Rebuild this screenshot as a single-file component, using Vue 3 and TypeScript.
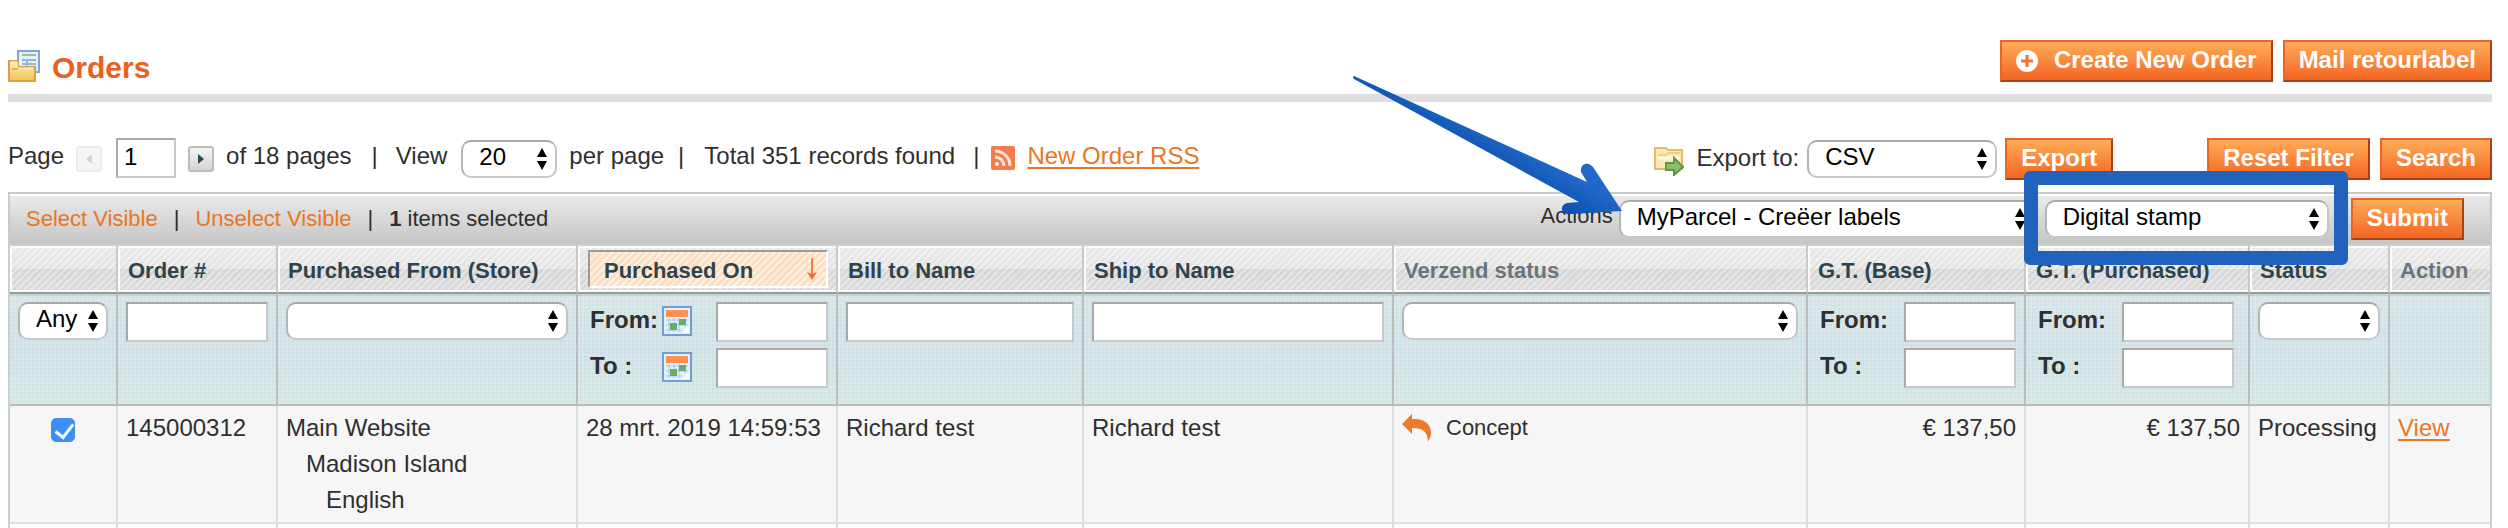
<script setup lang="ts">
import { ref } from 'vue'

interface Column {
  key: string
  label: string
  width?: number
  filter: 'select' | 'text' | 'dates' | 'range' | 'none'
  option?: string
  muted?: boolean
  sorted?: boolean
}

const columns: Column[] = [
  { key: 'pick', label: '', width: 108, filter: 'select', option: 'Any' },
  { key: 'order', label: 'Order #', width: 160, filter: 'text' },
  { key: 'store', label: 'Purchased From (Store)', width: 300, filter: 'select' },
  { key: 'date', label: 'Purchased On', width: 260, filter: 'dates', sorted: true },
  { key: 'bill', label: 'Bill to Name', width: 246, filter: 'text' },
  { key: 'ship', label: 'Ship to Name', width: 310, filter: 'text' },
  { key: 'shipment', label: 'Verzend status', filter: 'select', muted: true },
  { key: 'base', label: 'G.T. (Base)', width: 218, filter: 'range' },
  { key: 'total', label: 'G.T. (Purchased)', width: 224, filter: 'range' },
  { key: 'status', label: 'Status', width: 140, filter: 'select' },
  { key: 'action', label: 'Action', width: 100, filter: 'none', muted: true },
]

const bounds = [
  { key: 'from', label: 'From:' },
  { key: 'to', label: 'To :' },
]

const page = ref('1')
const checked = ref(true)
</script>

<template>
  <main class="page">
    <header class="head">
      <svg class="head-icon" viewBox="0 0 32 32" aria-hidden="true">
        <defs>
          <linearGradient id="folder" x1="0" y1="0" x2="0" y2="1">
            <stop offset="0" stop-color="#fff3c4" />
            <stop offset="1" stop-color="#f0c24a" />
          </linearGradient>
        </defs>
        <rect x="10" y="1" width="21" height="21" fill="#e6f0fc" stroke="#7ba7dc" stroke-width="2" />
        <path d="M14 5h14" stroke="#8cc88f" stroke-width="2" />
        <path d="M14 10h14M14 14h14M14 18h14M19 9v10" stroke="#8fb4e6" stroke-width="2" />
        <path d="M1 11h9v6h17v14H1z" fill="url(#folder)" stroke="#dda049" stroke-width="2" />
        <path d="M3 12h6v6h17" fill="none" stroke="#fff8dc" stroke-width="1" />
        <path d="M4 19h6" stroke="#e8b04f" stroke-width="2" />
      </svg>
      <h1>Orders</h1>
      <div class="head-actions">
        <button type="button" class="btn">
          <svg class="plus" viewBox="0 0 22 22" aria-hidden="true">
            <circle cx="11" cy="11" r="11" fill="#fff" />
            <path d="M11 5v12M5 11h12" stroke="#f0743a" stroke-width="3" />
          </svg>
          <span>Create New Order</span>
        </button>
        <button type="button" class="btn">Mail retourlabel</button>
      </div>
    </header>

    <div class="pager">
      <label for="page-number">Page</label>
      <button type="button" class="step previous" disabled aria-label="Previous page">
        <svg viewBox="0 0 8 12" aria-hidden="true"><path d="M7 1v10L1 6z" fill="#d0d4d6" /></svg>
      </button>
      <input id="page-number" v-model="page" class="field page-number" type="text" />
      <button type="button" class="step" aria-label="Next page">
        <svg viewBox="0 0 8 12" aria-hidden="true"><path d="M1 1v10l6-5z" fill="#2d4a5a" /></svg>
      </button>
      <span>of 18 pages</span>
      <span class="bar wide">|</span>
      <label for="page-size">View</label>
      <span class="pick page-size">
        <select id="page-size"><option>20</option></select>
        <svg class="arrows" viewBox="0 0 12 22" aria-hidden="true"><path d="M6 0l5 9H1zM6 22l5-9H1z" /></svg>
      </span>
      <span>per page</span>
      <span class="bar">|</span>
      <span>Total 351 records found</span>
      <span class="bar wide-left">|</span>
      <svg class="rss" viewBox="0 0 24 24" aria-hidden="true">
        <rect width="24" height="24" rx="2" fill="#f47b4c" />
        <circle cx="6" cy="18" r="2" fill="#fff" />
        <path d="M4 11a9 9 0 0 1 9 9M4 5a15 15 0 0 1 15 15" fill="none" stroke="#fde4da" stroke-width="3" />
      </svg>
      <a href="#rss">New Order RSS</a>

      <div class="export">
        <svg class="export-icon" viewBox="0 0 30 30" aria-hidden="true">
          <path d="M1 2h11l2 2h14v19H1z" fill="#fbe9bb" stroke="#e6b96e" stroke-width="2" />
          <path d="M4 9h8l2-2h12" fill="none" stroke="#f0cf86" stroke-width="2" />
          <path d="M4 12h22" stroke="#fff8e2" stroke-width="3" />
          <path d="M12 17h8v-5l9 9-9 8v-5h-8z" fill="#8cbd72" stroke="#5a9a45" stroke-width="2" />
        </svg>
        <label for="export-format">Export to:</label>
        <span class="pick format">
          <select id="export-format"><option>CSV</option></select>
          <svg class="arrows" viewBox="0 0 12 22" aria-hidden="true"><path d="M6 0l5 9H1zM6 22l5-9H1z" /></svg>
        </span>
        <button type="button" class="btn">Export</button>
      </div>
      <div class="search">
        <button type="button" class="btn">Reset Filter</button>
        <button type="button" class="btn">Search</button>
      </div>
    </div>

    <div class="mass">
      <div class="mass-select">
        <a href="#select">Select Visible</a>
        <span>|</span>
        <a href="#unselect">Unselect Visible</a>
        <span>|</span>
        <span><strong>1</strong> items selected</span>
      </div>
      <div class="mass-action">
        <label for="mass-action">Actions</label>
        <span class="pick mass-pick">
          <select id="mass-action"><option>MyParcel - Creëer labels</option></select>
          <svg class="arrows" viewBox="0 0 12 22" aria-hidden="true"><path d="M6 0l5 9H1zM6 22l5-9H1z" /></svg>
          <svg class="pointer" viewBox="0 0 276 142" aria-hidden="true">
            <defs>
              <linearGradient id="pointer-fill" gradientUnits="userSpaceOnUse" x1="160" y1="66" x2="144" y2="94">
                <stop offset="0" stop-color="#2167c7" />
                <stop offset="1" stop-color="#0c52b0" />
              </linearGradient>
            </defs>
            <path
              d="M4 2Q2 3 4 5L229 128L217 129Q211 131 212 136Q214 141 222 140L272 137L243 93Q238 87 233 91Q230 94 231 98L237 108Z"
              fill="url(#pointer-fill)"
            />
          </svg>
        </span>
        <span class="pick parcel-pick">
          <select aria-label="Package type"><option>Digital stamp</option></select>
          <svg class="arrows" viewBox="0 0 12 22" aria-hidden="true"><path d="M6 0l5 9H1zM6 22l5-9H1z" /></svg>
          <span class="frame"></span>
        </span>
        <button type="button" class="btn">Submit</button>
      </div>
    </div>

    <table class="grid">
      <colgroup>
        <col v-for="c in columns" :key="c.key" :style="c.width ? { width: c.width + 'px' } : undefined" />
      </colgroup>
      <thead>
        <tr class="titles">
          <th v-for="c in columns" :key="c.key" scope="col" :class="{ muted: c.muted }">
            <span v-if="c.sorted" class="sorted">
              {{ c.label }}
              <svg viewBox="0 0 12 24" aria-hidden="true">
                <path d="M6 0v18" stroke="#fb7b3a" stroke-width="2" />
                <path d="M1 14l5 2 5-2-5 8z" fill="#fb6a26" />
              </svg>
            </span>
            <template v-else>{{ c.label }}</template>
          </th>
        </tr>
        <tr class="filters">
          <td v-for="c in columns" :key="c.key">
            <span v-if="c.filter === 'select'" class="pick">
              <select :aria-label="c.label || 'Selection'"><option>{{ c.option }}</option></select>
              <svg class="arrows" viewBox="0 0 12 22" aria-hidden="true"><path d="M6 0l5 9H1zM6 22l5-9H1z" /></svg>
            </span>
            <input v-else-if="c.filter === 'text'" class="field" type="text" :aria-label="c.label" />
            <div v-else-if="c.filter !== 'none'" class="range" :class="c.filter">
              <div v-for="b in bounds" :key="b.key" class="range-line">
                <label :for="c.key + '-' + b.key">{{ b.label }}</label>
                <svg v-if="c.filter === 'dates'" class="calendar" viewBox="0 0 30 30" aria-hidden="true">
                  <rect x="1" y="1" width="28" height="28" fill="#e6f0fc" stroke="#6f9fdb" stroke-width="2" />
                  <rect x="4" y="4" width="22" height="7" fill="#ff9150" />
                  <path d="M4 14h22M4 19h22M4 24h16M7 12v14M12 12v14M17 12v14M23 12v9" stroke="#a9c6ea" stroke-width="1" />
                  <rect x="17" y="13" width="7" height="6" fill="#63b060" />
                  <rect x="8" y="17" width="7" height="7" fill="#63b060" />
                  <path d="M20 27l7-7v7z" fill="#fff" />
                </svg>
                <input :id="c.key + '-' + b.key" class="field" type="text" />
              </div>
            </div>
          </td>
        </tr>
      </thead>
      <tbody>
        <tr class="order">
          <td><input v-model="checked" type="checkbox" aria-label="Select order 145000312" /></td>
          <td>145000312</td>
          <td>
            <div>Main Website</div>
            <div class="indent-1">Madison Island</div>
            <div class="indent-2">English</div>
          </td>
          <td class="nowrap">28 mrt. 2019 14:59:53</td>
          <td>Richard test</td>
          <td>Richard test</td>
          <td>
            <span class="shipment">
              <svg viewBox="0 0 30 28" aria-hidden="true">
                <path d="M0 10L10 0v5C22 4 30 10 29 21l-3 7C26 18 21 14 10 14v6z" fill="#ea7a2c" />
              </svg>
              Concept
            </span>
          </td>
          <td class="number">€ 137,50</td>
          <td class="number">€ 137,50</td>
          <td>Processing</td>
          <td><a href="#view">View</a></td>
        </tr>
        <tr class="next"><td v-for="c in columns" :key="c.key"></td></tr>
      </tbody>
    </table>
  </main>
</template>

<style>
body {
  margin: 0;
  background: #fff;
}
</style>

<style scoped>
* {
  box-sizing: border-box;
}
.page {
  padding: 40px 16px 0 8px;
  color: #2f2f2f;
  font: 24px/36px "Liberation Sans", Arial, sans-serif;
}
input,
select,
button {
  margin: 0;
  font: inherit;
}
a {
  color: #ea7623;
  text-underline-offset: 3px;
  text-decoration-thickness: 2px;
}
.head {
  display: flex;
  align-items: flex-start;
  padding-bottom: 10px;
  border-bottom: 8px solid #dfdfdf;
}
.head-icon {
  width: 32px;
  height: 32px;
  margin-top: 10px;
}
h1 {
  margin: 12px 0 0 12px;
  color: #eb5e24;
  font-size: 30px;
  line-height: 32px;
}
.head-actions {
  display: flex;
  gap: 10px;
  margin-left: auto;
}
.btn {
  display: flex;
  flex: none;
  align-items: center;
  gap: 16px;
  height: 42px;
  padding: 0 14px 3px;
  border: 2px solid;
  border-color: #ea6428 #a3431a #a3431a #ea6428;
  background: linear-gradient(#ffac57, #f36523);
  color: #fff;
  font-weight: bold;
  white-space: nowrap;
}
.plus {
  width: 22px;
  height: 22px;
  margin-top: 3px;
}
.field {
  display: block;
  width: 100%;
  height: 40px;
  padding: 0 6px 2px;
  border: 2px solid;
  border-color: #a9a9a9 #c8c8c8 #c8c8c8 #a9a9a9;
  border-radius: 0;
  background: #fff;
  color: #000;
}
.pick {
  position: relative;
  display: block;
}
.pick select {
  display: block;
  width: 100%;
  height: 38px;
  padding: 0 20px 4px 16px;
  border: 2px solid;
  border-color: #a9a9a9 #c4c4c4 #c8c8c8 #b4b4b4;
  border-radius: 10px;
  background: #fff;
  color: #000;
  line-height: 28px;
  appearance: none;
}
.arrows {
  position: absolute;
  top: 8px;
  right: 9px;
  width: 12px;
  height: 22px;
  pointer-events: none;
}
.pager {
  display: flex;
  align-items: flex-start;
  gap: 12px;
  margin-top: 36px;
  white-space: nowrap;
}
.step {
  display: flex;
  align-items: center;
  justify-content: center;
  width: 26px;
  height: 26px;
  margin-top: 8px;
  padding: 0;
  border: 2px solid #bcbcbc;
  border-radius: 3px;
  background: linear-gradient(#f4f4f4, #d4d4d4);
}
.previous {
  margin-right: 2px;
}
.step:disabled {
  border-color: #ececec;
  background: #f5f5f5;
}
.step svg {
  width: 8px;
  height: 12px;
}
.page-number {
  width: 60px;
}
.bar {
  margin: 0 8px 0 2px;
}
.wide {
  margin: 0 6px 0 8px;
}
.wide-left {
  margin: 0 0 0 6px;
}
.page-size {
  width: 96px;
  margin: 2px 0 0 2px;
}
.rss {
  width: 24px;
  height: 24px;
  margin-top: 8px;
}
.export {
  display: flex;
  gap: 8px;
  margin-left: auto;
  line-height: 40px;
}
.export-icon {
  width: 30px;
  height: 30px;
  margin: 8px 4px 0 0;
}
.format {
  width: 190px;
  margin-top: 2px;
}
.search {
  display: flex;
  gap: 10px;
  margin-left: 82px;
}
.mass {
  display: flex;
  align-items: flex-start;
  justify-content: space-between;
  height: 54px;
  margin-top: 12px;
  padding: 2px 26px 0 16px;
  border: 2px solid #c9c9c9;
  border-bottom-color: #c8d0d0;
  background: linear-gradient(#ebebeb, #c5c5c5);
  box-shadow: inset 0 2px #fff;
  white-space: nowrap;
}
.mass-select {
  display: flex;
  gap: 16px;
  font-size: 22px;
  line-height: 46px;
}
.mass-select a {
  text-decoration: none;
}
.mass-action {
  display: flex;
}
.mass-action label {
  font-size: 22px;
  line-height: 40px;
}
.mass-pick {
  width: 416px;
  margin: 4px 0 0 6px;
}
.parcel-pick {
  width: 284px;
  margin: 4px 22px 0 10px;
}
.mass-action .btn {
  margin-top: 2px;
}
.pointer {
  position: absolute;
  z-index: 2;
  top: -126px;
  left: -269px;
  width: 276px;
  height: 142px;
  pointer-events: none;
}
.frame {
  position: absolute;
  z-index: 2;
  inset: -29px -19px -25px -21px;
  border: 14px solid #2162bd;
  border-radius: 6px;
  pointer-events: none;
}
.grid {
  width: 100%;
  border: solid #c8d0d0;
  border-width: 0 2px;
  border-spacing: 0;
  table-layout: fixed;
}
.grid th,
.grid td {
  text-align: left;
  vertical-align: top;
}
.grid th:last-child,
.grid td:last-child {
  border-right: 0;
}
.titles th {
  height: 48px;
  padding: 4px 8px 0 10px;
  border-right: 2px solid #c8c8c8;
  border-bottom: 2px solid #929b99;
  background:
    repeating-linear-gradient(135deg, rgba(255, 255, 255, 0.3) 0 2px, rgba(180, 180, 180, 0.08) 2px 5px),
    linear-gradient(#ededed 0, #e8e8e8 50%, #dadada 50%, #dedede 100%);
  box-shadow: inset 2px 2px #fbfbfb, inset 0 -2px #fbfbfb;
  color: #2d444f;
  font-size: 22px;
  line-height: 42px;
  white-space: nowrap;
}
.titles .muted {
  color: #67767e;
}
.sorted {
  display: flex;
  justify-content: space-between;
  height: 38px;
  padding: 0 8px 0 14px;
  border: 2px solid;
  border-color: #9a9a9a #fff #fff #9a9a9a;
  background: repeating-linear-gradient(135deg, #fff0df 0 2px, #fadfc4 2px 5px);
  line-height: 38px;
}
.sorted svg {
  width: 12px;
  height: 24px;
  margin-top: 6px;
}
.filters td {
  height: 112px;
  padding: 8px 8px 16px;
  border-right: 2px solid #bcbcbc;
  border-bottom: 2px solid #b9bcbb;
  background:
    repeating-linear-gradient(90deg, rgba(255, 255, 255, 0.12) 0 2px, transparent 2px 4px),
    repeating-linear-gradient(rgba(255, 255, 255, 0.12) 0 2px, transparent 2px 4px),
    linear-gradient(#d2e3e4, #cddfe4 50%, #d2e5e3);
  box-shadow: inset 0 2px rgba(160, 175, 175, 0.35);
}
.range {
  display: flex;
  flex-direction: column;
  gap: 6px;
  width: 200px;
}
.range.dates {
  width: 100%;
}
.range-line {
  display: flex;
}
.range-line label {
  width: 76px;
  padding-left: 4px;
  font-weight: bold;
}
.range-line .field {
  width: 112px;
  margin-left: auto;
}
.calendar {
  width: 30px;
  height: 30px;
  margin-top: 4px;
}
.order td {
  padding: 4px 8px;
  border-right: 2px solid #dae0de;
  border-bottom: 2px solid #dae0de;
  background: #f6f6f6;
}
.order input {
  appearance: none;
  display: block;
  width: 24px;
  height: 24px;
  margin: 8px auto 0;
  border: 1px solid #aaa;
  border-radius: 5px;
  background: #fff;
}
.order input:checked {
  border-color: #3b8ff7;
  background: #3b8ff7;
}
.order input:checked::after {
  content: "";
  display: block;
  width: 8px;
  height: 15px;
  margin: 1px 0 0 7px;
  border: solid #fff;
  border-width: 0 3px 3px 0;
  transform: rotate(38deg);
}
.nowrap {
  white-space: nowrap;
}
.indent-1 {
  padding-left: 20px;
}
.indent-2 {
  padding-left: 40px;
}
.shipment {
  display: flex;
  gap: 14px;
  font-size: 22px;
}
.shipment svg {
  width: 30px;
  height: 28px;
  margin-top: 4px;
}
.order .number {
  text-align: right;
}
.next td {
  height: 4px;
  padding: 0;
  border-right: 2px solid #dae0de;
}
</style>
